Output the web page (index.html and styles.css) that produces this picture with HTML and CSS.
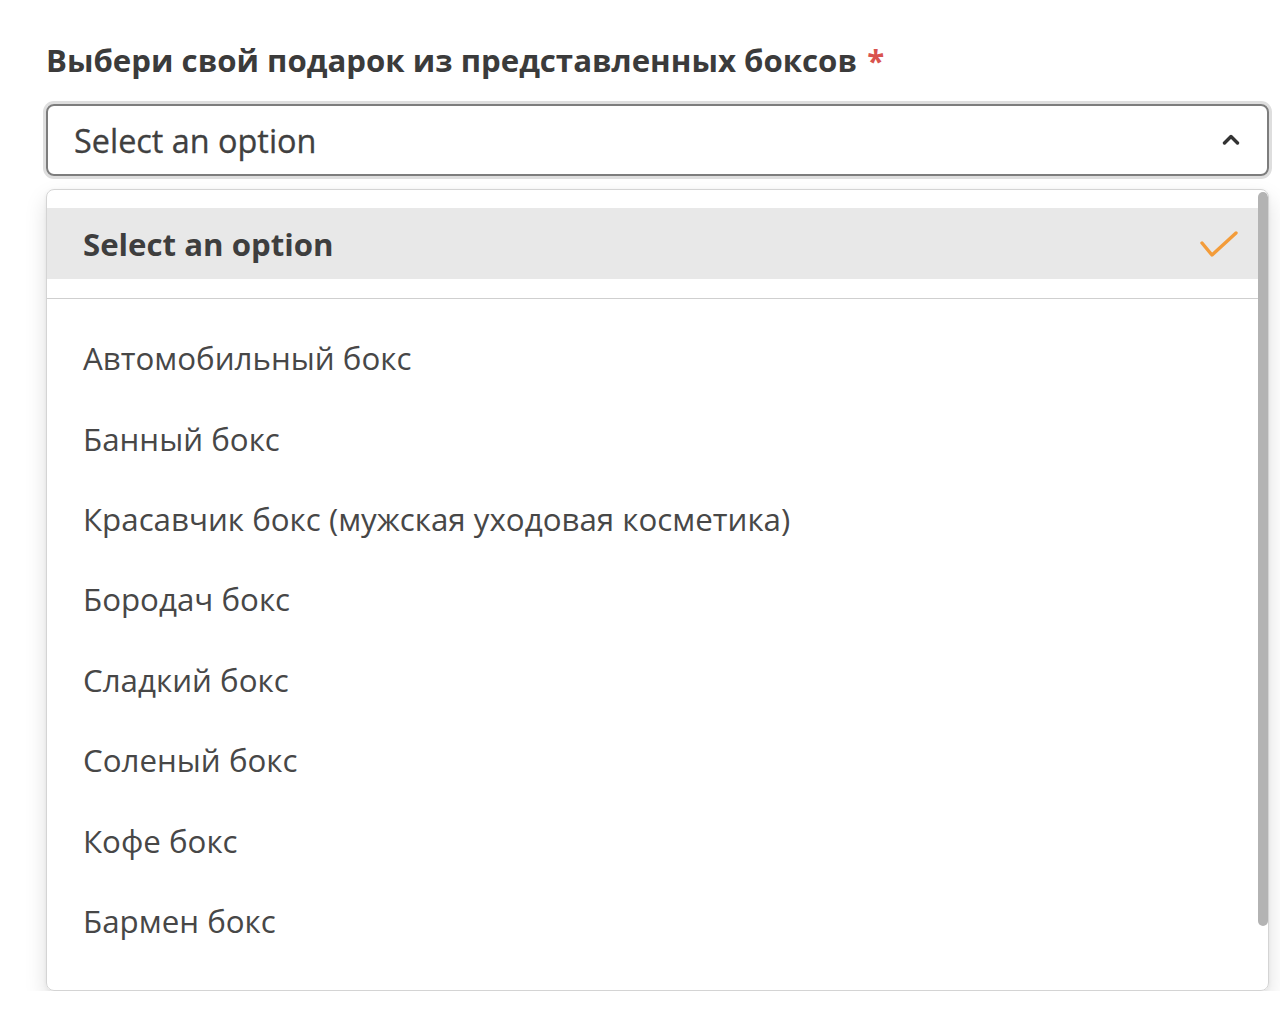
FILE: index.html
```html
<!DOCTYPE html>
<html lang="ru">
<head>
<meta charset="utf-8">
<link rel="stylesheet" href="styles.css">
</head>
<body>
<div class="field">
  <label class="label">Выбери свой подарок из представленных боксов <span class="req">*</span></label>
  <div class="select">
    <span class="select-value">Select an option</span>
    <svg class="caret" width="18" height="12" viewBox="0 0 18 12"><polyline points="2.5,10 9,3.5 15.5,10" fill="none" stroke="#333" stroke-width="3.4" stroke-linecap="round" stroke-linejoin="round"/></svg>
  </div>
  <div class="dropdown">
    <div class="list">
      <div class="option selected">
        <span>Select an option</span>
        <svg class="check" width="40" height="30" viewBox="0 0 40 30"><polyline points="3,13 13,25 37,3" fill="none" stroke="#f39c3a" stroke-width="3.4" stroke-linecap="round" stroke-linejoin="round"/></svg>
      </div>
      <div class="divider"></div>
      <div class="option">Автомобильный бокс</div>
      <div class="option">Банный бокс</div>
      <div class="option">Красавчик бокс (мужская уходовая косметика)</div>
      <div class="option">Бородач бокс</div>
      <div class="option">Сладкий бокс</div>
      <div class="option">Соленый бокс</div>
      <div class="option">Кофе бокс</div>
      <div class="option">Бармен бокс</div>
    </div>
    <div class="scrollbar"><div class="thumb"></div></div>
  </div>
</div>
</body>
</html>
```
FILE: styles.css
```css
* { box-sizing: border-box; }
html, body { margin: 0; background: #fff; }
body {
  font-family: "Open Sans", "Noto Sans", sans-serif;
  color: #454545;
  padding: 36px 11px 0 46px;
}
.field { display: flex; flex-direction: column; }
.label {
  font-weight: 700;
  font-size: 31.2px;
  color: #3b3b3b;
  line-height: 48px;
  margin-bottom: 20px;
}
.req { color: #d9534f; margin-left: 2px; }
.select {
  height: 72px;
  border: 2px solid #7d7d7d;
  border-radius: 8px;
  box-shadow: 0 0 0 3px #dedede;
  display: flex;
  align-items: center;
  justify-content: space-between;
  padding: 0 27px 0 26px;
}
.select-value { font-size: 32.4px; color: #404040; -webkit-text-stroke: 0.3px #404040; }
.caret { display: block; margin-top: -2px; }
.dropdown {
  margin-top: 13px;
  height: 802px;
  border: 1px solid #d4d4d4;
  border-radius: 8px;
  box-shadow: 0 10px 22px rgba(0,0,0,0.13), 0 1px 4px rgba(0,0,0,0.06);
  overflow: hidden;
  position: relative;
}
.list {
  padding-top: 18px;
  margin-right: 9px;
  display: flex;
  flex-direction: column;
}
.option {
  height: 80.4px;
  display: flex;
  align-items: center;
  padding-left: 36px;
  font-size: 31.3px;
  color: #474747;
  flex-shrink: 0;
}
.option.selected {
  height: 71px;
  background: #e8e8e8;
  font-weight: 700;
  font-size: 31.2px;
  color: #3e3e3e;
  justify-content: space-between;
  padding-right: 20px;
}
.check { display: block; margin-top: 2px; }
.divider {
  height: 1px;
  background: #cfcfcf;
  margin: 19px 0 19px;
  flex-shrink: 0;
}
.scrollbar {
  position: absolute;
  top: 2px;
  right: 0;
  width: 10px;
  height: 734px;
}
.thumb {
  width: 100%;
  height: 100%;
  background: #b3b3b3;
  border-radius: 5px;
}
```
